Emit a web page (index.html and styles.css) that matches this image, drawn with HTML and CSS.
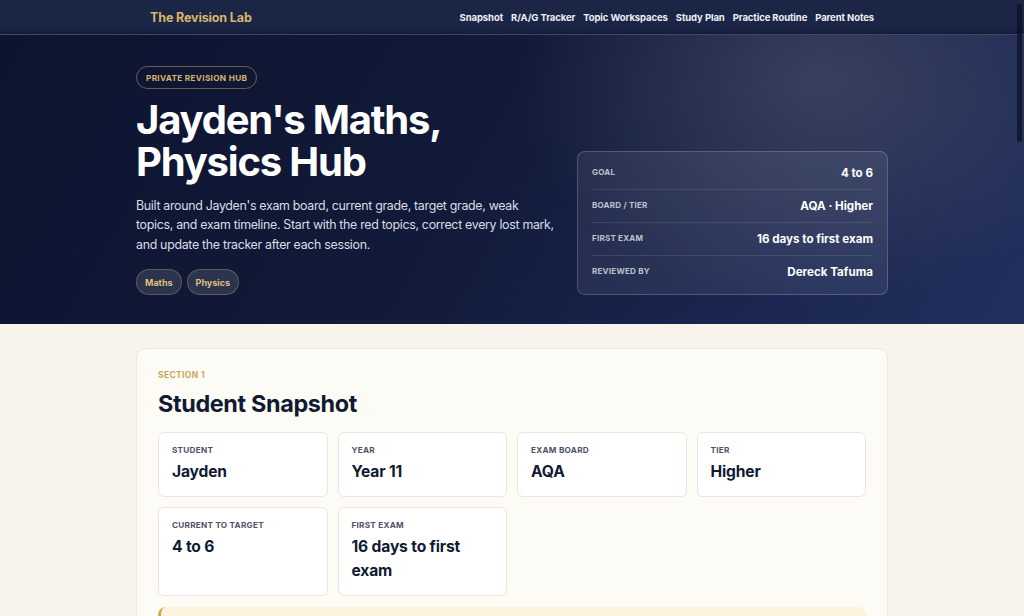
FILE: index.html
```html
<!DOCTYPE html>
<html lang="en">
<head>
    <meta charset="UTF-8">
    <meta name="viewport" content="width=device-width, initial-scale=1.0">
    <title>The Revision Lab - Jayden's Maths, Physics Hub</title>
    <link rel="stylesheet" href="styles.css">
</head>
<body>
    <header class="topbar">
        <div class="topbar-inner">
            <a class="brand" href="#">The Revision Lab</a>
            <nav class="nav">
                <a href="#snapshot">Snapshot</a>
                <a href="#tracker">R/A/G Tracker</a>
                <a href="#topics">Topic Workspaces</a>
                <a href="#plan">Study Plan</a>
                <a href="#routine">Practice Routine</a>
                <a href="#notes">Parent Notes</a>
            </nav>
        </div>
    </header>

    <section class="hero">
        <div class="hero-inner">
            <div class="hero-copy">
                <span class="eyebrow-pill">Private Revision Hub</span>
                <h1>Jayden's Maths, Physics Hub</h1>
                <p class="lead">Built around Jayden's exam board, current grade, target grade, weak topics, and exam timeline. Start with the red topics, correct every lost mark, and update the tracker after each session.</p>
                <div class="subject-tags">
                    <span class="tag">Maths</span>
                    <span class="tag">Physics</span>
                </div>
            </div>

            <div class="summary-card">
                <div class="summary-row">
                    <span class="summary-label">Goal</span>
                    <span class="summary-value">4 to 6</span>
                </div>
                <div class="summary-row">
                    <span class="summary-label">Board / Tier</span>
                    <span class="summary-value">AQA · Higher</span>
                </div>
                <div class="summary-row">
                    <span class="summary-label">First exam</span>
                    <span class="summary-value">16 days to first exam</span>
                </div>
                <div class="summary-row">
                    <span class="summary-label">Reviewed by</span>
                    <span class="summary-value">Dereck Tafuma</span>
                </div>
            </div>
        </div>
    </section>

    <main class="page">
        <section class="panel" id="snapshot">
            <p class="section-kicker">Section 1</p>
            <h2>Student Snapshot</h2>
            <div class="stat-grid">
                <div class="stat">
                    <span class="stat-label">Student</span>
                    <span class="stat-value">Jayden</span>
                </div>
                <div class="stat">
                    <span class="stat-label">Year</span>
                    <span class="stat-value">Year 11</span>
                </div>
                <div class="stat">
                    <span class="stat-label">Exam board</span>
                    <span class="stat-value">AQA</span>
                </div>
                <div class="stat">
                    <span class="stat-label">Tier</span>
                    <span class="stat-value">Higher</span>
                </div>
                <div class="stat">
                    <span class="stat-label">Current to target</span>
                    <span class="stat-value">4 to 6</span>
                </div>
                <div class="stat">
                    <span class="stat-label">First exam</span>
                    <span class="stat-value">16 days to first exam</span>
                </div>
            </div>
            <div class="callout">
                <p>Red topics first: every lost mark gets a correction before the next session.</p>
            </div>
        </section>
    </main>

    <div class="scroll-thumb"></div>
</body>
</html>
```

FILE: styles.css
```css
* {
    box-sizing: border-box;
}
body {
    font-family: Inter, "Noto Sans", Arial, sans-serif;
    margin: 0;
    padding: 0;
    background-color: #f8f4ec;
    color: #111a33;
}
a {
    text-decoration: none;
    color: inherit;
}

/* top navigation */
.topbar {
    background: linear-gradient(180deg, #1b2647 0%, #1b2647 72%, #131c3a 100%);
    border-bottom: 1px solid rgba(255, 255, 255, 0.16);
}
.topbar-inner {
    max-width: 752px;
    margin: 0 auto;
    padding: 0 14px;
    height: 34px;
    display: flex;
    align-items: center;
    justify-content: space-between;
}
.brand {
    color: #d8b56a;
    font-weight: 700;
    font-size: 12.5px;
    letter-spacing: -0.01em;
}
.nav {
    display: flex;
    gap: 8px;
}
.nav a {
    color: #eef0f5;
    font-weight: 700;
    font-size: 9.5px;
    letter-spacing: -0.01em;
}

/* hero */
.hero {
    background:
        radial-gradient(ellipse 300px 220px at 80% 16%, rgba(95, 98, 112, 0.45), rgba(95, 98, 112, 0) 100%),
        linear-gradient(120deg, #0d1430 0%, #111a38 45%, #1a2650 75%, #22305e 100%);
    padding: 30px 0 29px;
}
.hero-inner {
    max-width: 752px;
    margin: 0 auto;
    display: grid;
    grid-template-columns: 1fr 311px;
    gap: 20px;
    align-items: end;
}
.eyebrow-pill {
    display: inline-block;
    padding: 6px 9px 5px;
    border: 1px solid rgba(216, 181, 106, 0.45);
    border-radius: 999px;
    color: #d8b56a;
    font-size: 8.2px;
    font-weight: 700;
    letter-spacing: 0.04em;
    text-transform: uppercase;
}
.hero h1 {
    color: #fff;
    font-size: 40px;
    line-height: 1.06;
    letter-spacing: -0.03em;
    font-weight: 700;
    margin: 10px 0 12px;
}
.lead {
    color: #d9dde7;
    font-size: 12.4px;
    line-height: 19.5px;
    letter-spacing: -0.025em;
    margin: 0 0 15px;
}
.subject-tags {
    display: flex;
    gap: 5px;
}
.tag {
    padding: 7px 8px 6px;
    border-radius: 999px;
    border: 1px solid rgba(216, 181, 106, 0.3);
    background: rgba(255, 255, 255, 0.12);
    color: #dcc07e;
    font-size: 9px;
    font-weight: 700;
}

.summary-card {
    border: 1px solid rgba(255, 255, 255, 0.18);
    border-radius: 8px;
    background: rgba(255, 255, 255, 0.07);
    padding: 5px 14px 6px;
}
.summary-row {
    display: flex;
    justify-content: space-between;
    align-items: center;
    padding: 9px 0 8px;
    border-bottom: 1px solid rgba(255, 255, 255, 0.1);
}
.summary-row:last-child {
    border-bottom: none;
}
.summary-label {
    color: #bfc3cf;
    font-size: 8px;
    font-weight: 700;
    letter-spacing: 0.03em;
    text-transform: uppercase;
    margin-top: -4px;
}
.summary-value {
    color: #fff;
    font-size: 11.6px;
    font-weight: 700;
    line-height: 15px;
}

/* main content */
.page {
    max-width: 752px;
    margin: 24px auto 0;
}
.panel {
    background: #fdfbf6;
    border: 1px solid #efe7d8;
    border-radius: 10px;
    padding: 21px 21px 0;
}
.section-kicker {
    margin: 0;
    color: #c9a55a;
    font-size: 8.4px;
    font-weight: 700;
    letter-spacing: 0.05em;
    text-transform: uppercase;
}
.panel h2 {
    margin: 9px 0 14px;
    font-size: 23.4px;
    font-weight: 700;
    letter-spacing: -0.015em;
    color: #111a33;
}
.stat-grid {
    display: grid;
    grid-template-columns: repeat(4, 1fr);
    gap: 10px;
}
.stat {
    background: #fff;
    border: 1px solid #ece6db;
    border-radius: 6px;
    padding: 12px 13px 12px;
    display: flex;
    flex-direction: column;
    gap: 5px;
    min-height: 64px;
}
.stat-label {
    color: #4d5366;
    font-size: 8.2px;
    font-weight: 700;
    letter-spacing: 0.03em;
    text-transform: uppercase;
}
.stat-value {
    color: #111a33;
    font-size: 15.6px;
    font-weight: 700;
    line-height: 24px;
    letter-spacing: -0.01em;
}
.callout {
    margin-top: 11px;
    background: #fdf3de;
    border-left: 3px solid #d2a94c;
    border-radius: 8px;
    padding: 12px 14px;
}
.callout p {
    margin: 0;
    font-size: 13px;
    color: #5a4a25;
}

/* overlay scroll thumb */
.scroll-thumb {
    position: fixed;
    top: 4px;
    right: 2px;
    width: 5px;
    height: 138px;
    border-radius: 3px;
    background: rgba(10, 14, 30, 0.7);
}
```
